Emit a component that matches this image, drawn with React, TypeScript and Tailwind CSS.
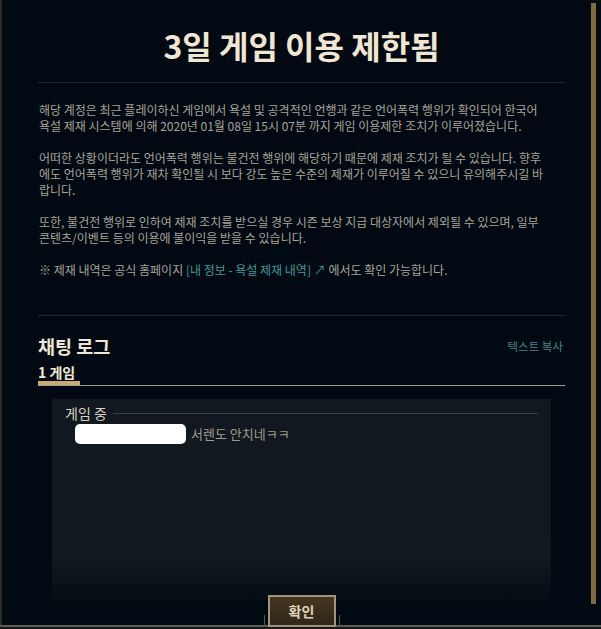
import React from "react";

const font = { fontFamily: '"Noto Sans CJK KR", "Noto Sans", sans-serif' };

export default function App() {
  return (
    <div className="w-[601px] h-[629px] bg-[#010a13] flex flex-col overflow-hidden" style={font}>
      <div className="flex flex-row h-[625px]">
        <div className="w-[2px] bg-[#2e2a22]" />
        <div className="flex-1 flex flex-col pl-[36px] pr-[25px]">
          <div className="pt-[25px] h-[65px] text-center text-[32px] leading-[40px] font-bold text-[#f0e6d2]">
            3일 게임 이용 제한됨
          </div>
          <div className="mt-[17px] h-px bg-[#1c2a36]" />
          <div className="mt-[19px] ml-[1px] text-[12px] leading-[16px] text-[#a8a397] whitespace-nowrap">
            <p>
              해당 계정은 최근 플레이하신 게임에서 욕설 및 공격적인 언행과 같은 언어폭력 행위가 확인되어 한국어
              <br />
              욕설 제재 시스템에 의해 2020년 01월 08일 15시 07분 까지 게임 이용제한 조치가 이루어졌습니다.
            </p>
            <p className="mt-[16px]">
              어떠한 상황이더라도 언어폭력 행위는 불건전 행위에 해당하기 때문에 제재 조치가 될 수 있습니다. 향후
              <br />
              에도 언어폭력 행위가 재차 확인될 시 보다 강도 높은 수준의 제재가 이루어질 수 있으니 유의해주시길 바
              <br />
              랍니다.
            </p>
            <p className="mt-[16px]">
              또한, 불건전 행위로 인하여 제재 조치를 받으실 경우 시즌 보상 지급 대상자에서 제외될 수 있으며, 일부
              <br />
              콘텐츠/이벤트 등의 이용에 불이익을 받을 수 있습니다.
            </p>
            <p className="mt-[16px]">
              ※ 제재 내역은 공식 홈페이지 <span className="text-[#3f9a9a]">[내 정보 - 욕설 제재 내역]</span>{" "}
              <span className="text-[#3f9a9a]">↗</span> 에서도 확인 가능합니다.
            </p>
          </div>
          <div className="mt-[37px] h-px bg-[#1c2a36]" />
          <div className="mt-[18px] flex flex-row items-center justify-between h-[24px]">
            <span className="text-[18.5px] leading-[24px] font-bold text-[#f0e6d2]">채팅 로그</span>
            <span className="text-[11.5px] leading-[16px] text-[#3a8585] mr-[2px]">텍스트 복사</span>
          </div>
          <div className="mt-[5px] h-[18px] text-[14px] leading-[18px] font-bold text-[#f0e6d2]">1 게임</div>
          <div className="w-[42px] h-[4px] bg-[#c8aa6e]" />
          <div className="h-px bg-[#a09b8c]" />
          <div className="mt-[13px] mx-[14px] flex-1 flex flex-col bg-linear-to-b from-[#111820] from-80% to-[#040c14] px-[13px] pt-[5px]">
            <div className="flex flex-row items-center h-[18px]">
              <span className="text-[14px] leading-[18px] text-[#d6d0c2]">게임 중</span>
              <div className="ml-[6px] flex-1 h-px bg-[#3a414a]" />
            </div>
            <div className="mt-[2px] flex flex-row items-center h-[20px] pl-[10px]">
              <div className="w-[111px] h-[20px] bg-white rounded-[5px]" />
              <span className="ml-[5px] text-[13px] leading-[18px] text-[#a09b8c]">서렌도 안치네ㅋㅋ</span>
            </div>
          </div>
          <div className="relative z-10 -mt-[6px] -mb-[2px] h-[32px] flex flex-row justify-center items-end">
            <div className="w-px h-[10px] mb-[2px] bg-[#5e5443]" />
            <div className="ml-[3px] w-[68px] h-[32px] border-2 border-[#a0957c] bg-linear-to-b from-[#45361f] to-[#30261a] flex items-center justify-center">
              <span className="text-[14px] font-bold text-[#e0d4b8] leading-[18px]">확인</span>
            </div>
            <div className="ml-[3px] w-px h-[10px] mb-[2px] bg-[#5e5443]" />
          </div>
        </div>
        <div className="w-[11px] pl-[1px] pt-[3px]">
          <div className="w-[5px] h-[601px] bg-[#83693b]" />
        </div>
      </div>
      <div className="h-[2px] bg-[#5f5b50]" />
      <div className="h-[2px] bg-[#15171a]" />
    </div>
  );
}
